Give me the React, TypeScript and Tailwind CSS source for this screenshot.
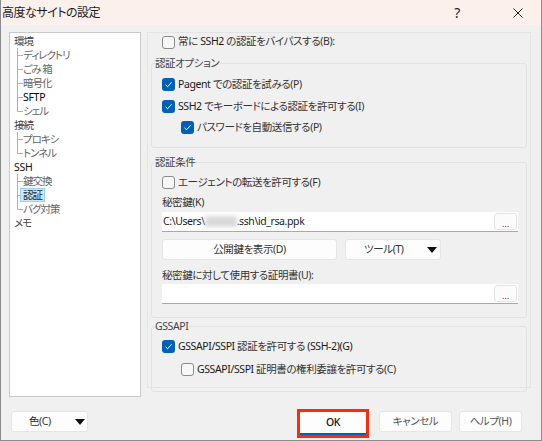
import React from 'react'

const FONT = "font-['Noto_Sans','Noto_Sans_CJK_JP',sans-serif] [font-feature-settings:'palt']"

type Node = { t: string; lvl: 0 | 1; dark?: boolean; last?: boolean; sel?: boolean }

const TREE: Node[] = [
  { t: '環境', lvl: 0 },
  { t: 'ディレクトリ', lvl: 1 },
  { t: 'ごみ 箱', lvl: 1 },
  { t: '暗号化', lvl: 1 },
  { t: 'SFTP', lvl: 1, dark: true },
  { t: 'シェル', lvl: 1, last: true },
  { t: '接続', lvl: 0 },
  { t: 'プロキシ', lvl: 1 },
  { t: 'トンネル', lvl: 1, last: true },
  { t: 'SSH', lvl: 0, dark: true },
  { t: '鍵交換', lvl: 1 },
  { t: '認証', lvl: 1, sel: true },
  { t: 'バグ対策', lvl: 1, last: true },
  { t: 'メモ', lvl: 0 },
]

function Check({ on }: { on?: boolean }) {
  if (on) {
    return (
      <span className="w-[13px] h-[13px] rounded-[3px] bg-[#005fb8] flex items-center justify-center shrink-0">
        <svg width="13" height="13" viewBox="0 0 13 13">
          <path d="M3.5 6.8 L5.6 8.8 L9.6 4.2" fill="none" stroke="#fff" strokeWidth="1" />
        </svg>
      </span>
    )
  }
  return <span className="w-[13px] h-[13px] rounded-[3px] bg-[#f7f7f7] border border-[#8a8a8a] shrink-0" />
}

function CheckRow({ on, label, indent }: { on?: boolean; label: React.ReactNode; indent?: boolean }) {
  return (
    <div className={`flex items-center h-[16px] gap-[3px] ${indent ? 'pl-[29px]' : 'pl-[10px]'}`}>
      <Check on={on} />
      <span className="leading-[16px] whitespace-nowrap">{label}</span>
    </div>
  )
}

function Tri() {
  return (
    <svg width="10" height="6" viewBox="0 0 10 6" className="shrink-0">
      <polygon points="0,0 10,0 5,6" fill="#111" />
    </svg>
  )
}

function Group({ title, className, children }: { title: string; className?: string; children: React.ReactNode }) {
  return (
    <fieldset className={`border border-[#e2e2e2] rounded-[3px] mx-[3px] ${className || ''}`}>
      <legend className="ml-[3px] pr-[1px] leading-[14px] text-[#444]">{title}</legend>
      {children}
    </fieldset>
  )
}

function Field({ children }: { children?: React.ReactNode }) {
  return (
    <div className="ml-[10px] mr-[8px] h-[20px] bg-white border-b border-[#a8a8a8] flex items-center">
      <div className="flex-1 pl-[1px] text-[#1a1a1a] whitespace-nowrap flex items-center">{children}</div>
      <div className="w-[23px] h-[17px] mr-[1px] mb-[1px] bg-[#fbfbfb] border border-[#e3e3e3] rounded-[3px] flex items-end justify-center text-[9px] leading-[11px] text-[#444] tracking-normal">
        ...
      </div>
    </div>
  )
}

function Btn({ className, children }: { className?: string; children: React.ReactNode }) {
  return (
    <div className={`h-[21px] bg-[#fdfdfd] border border-[#e5e5e5] rounded-[3px] flex items-center text-[#333] ${className || ''}`}>
      {children}
    </div>
  )
}

export default function App() {
  return (
    <div className={`${FONT} w-[542px] h-[441px] bg-[#f0f0f0] border-x border-b border-[#8c8c8c] text-[10.5px] tracking-[-0.4px] text-[#333] overflow-hidden`}>
      {/* title bar */}
      <div className="h-[25px] bg-[#fbf0ec] flex items-center">
        <span className="pl-[1px] text-[12px] tracking-[-0.5px] text-[#1b1b1b]">高度なサイトの設定</span>
        <span className="flex-1" />
        <span className="w-[14px] text-center text-[14px] text-[#222]">?</span>
        <svg width="10" height="10" viewBox="0 0 10 10" className="ml-[49px] mr-[18px]">
          <path d="M0.5 0.5 L9.5 9.5 M9.5 0.5 L0.5 9.5" stroke="#222" strokeWidth="1" />
        </svg>
      </div>

      <div className="flex pt-[7px]">
        {/* tree */}
        <div className="ml-[8px] w-[132px] h-[365px] bg-white border border-[#c9c9c9] pt-[1px] tracking-[-1px]">
          {TREE.map((n, i) => (
            <div key={i} className="flex items-center h-[14px] leading-[14px] whitespace-nowrap">
              {n.lvl === 0 ? (
                <span className={`pl-[4px] ${n.dark ? 'text-[#111] tracking-[-0.3px]' : 'text-[#444]'}`}>{n.t}</span>
              ) : (
                <>
                  <svg width="6" height="14" viewBox="0 0 6 14" className="ml-[7px] shrink-0">
                    <path d={n.last ? 'M0.5 0 V7.5 H6' : 'M0.5 0 V14 M0.5 7.5 H6'} fill="none" stroke="#b0b0b0" strokeWidth="1" />
                  </svg>
                  {n.sel ? (
                    <span className="-ml-[3px] px-[2px] h-[14px] bg-[#cce8ff] border border-[#99d1ff] leading-[12px] text-[#222]">{n.t}</span>
                  ) : (
                    <span className={n.dark ? 'text-[#000] tracking-[-0.3px]' : 'text-[#666]'}>{n.t}</span>
                  )}
                </>
              )}
            </div>
          ))}
        </div>

        {/* right panel */}
        <div className="ml-[6px] w-[384px] h-[356px] border border-[#e4e4e4] pt-[1px]">
          <div className="flex items-center h-[16px] gap-[3px] pl-[14px]">
            <Check />
            <span>常に <span className="text-[#1a1a1a]">SSH2</span> の認証をバイパスする(B):</span>
          </div>

          <Group title="認証オプション" className="mt-[6px] pb-[12px]">
            <div className="mt-[6px]">
              <CheckRow on label={<><span className="text-[#1a1a1a]">Pagent</span> での認証を試みる(P)</>} />
            </div>
            <div className="mt-[6px]">
              <CheckRow on label={<><span className="text-[#1a1a1a]">SSH2</span> でキーボードによる認証を許可する(I)</>} />
            </div>
            <div className="mt-[5px]">
              <CheckRow on indent label="パスワードを自動送信する(P)" />
            </div>
          </Group>

          <Group title="認証条件" className="mt-[7px] pb-[13px]">
            <div className="mt-[5px]">
              <CheckRow label="エージェントの転送を許可する(F)" />
            </div>
            <div className="mt-[5px] ml-[10px] h-[14px] leading-[14px]">秘密鍵(K)</div>
            <div className="mt-[3px]">
              <Field>
                <span>{'C:\\Users\\'}</span>
                <span className="inline-block w-[32px] h-[11px] bg-[#d9d9d9] blur-[2px]" />
                <span>{'.ssh\\id_rsa.ppk'}</span>
              </Field>
            </div>
            <div className="mt-[7px] ml-[10px] flex gap-[8px]">
              <Btn className="w-[175px] justify-center">公開鍵を表示(D)</Btn>
              <Btn className="w-[96px] pl-[18px]">
                <span>ツール(T)</span>
                <span className="flex-1" />
                <span className="mr-[3px]"><Tri /></span>
              </Btn>
            </div>
            <div className="mt-[8px] ml-[10px] h-[14px] leading-[14px]">秘密鍵に対して使用する証明書(U):</div>
            <div className="mt-[2px]">
              <Field />
            </div>
          </Group>

          <Group title="GSSAPI" className="mt-[1px] pb-[14px]">
            <div className="mt-[5px]">
              <CheckRow on label={<><span className="text-[#1a1a1a]">GSSAPI/SSPI</span> 認証を許可する <span className="text-[#1a1a1a]">(SSH-2)(G)</span></>} />
            </div>
            <div className="mt-[7px]">
              <CheckRow indent label={<><span className="text-[#1a1a1a]">GSSAPI/SSPI</span> 証明書の権利委譲を許可する(C)</>} />
            </div>
          </Group>
        </div>
      </div>

      {/* bottom buttons */}
      <div className="flex items-start mt-[12px]">
        <Btn className="mt-[2px] ml-[10px] w-[77px] pl-[17px]">
          <span>色(C)</span>
          <span className="flex-1" />
          <span className="mr-[2px]"><Tri /></span>
        </Btn>
        <div className="ml-[209px] w-[72px] h-[29px] border-[3px] border-[#fc2b0c]">
          <div className="h-full bg-[#fdfdfd] border-b-2 border-[#005fb8] flex items-center justify-center text-[#111] font-medium">
            OK
          </div>
        </div>
        <Btn className="mt-[2px] ml-[10px] w-[73px] justify-center text-[#555]">キャンセル</Btn>
        <Btn className="mt-[2px] ml-[7px] w-[63px] justify-center text-[#555]">ヘルプ(H)</Btn>
      </div>
    </div>
  )
}
